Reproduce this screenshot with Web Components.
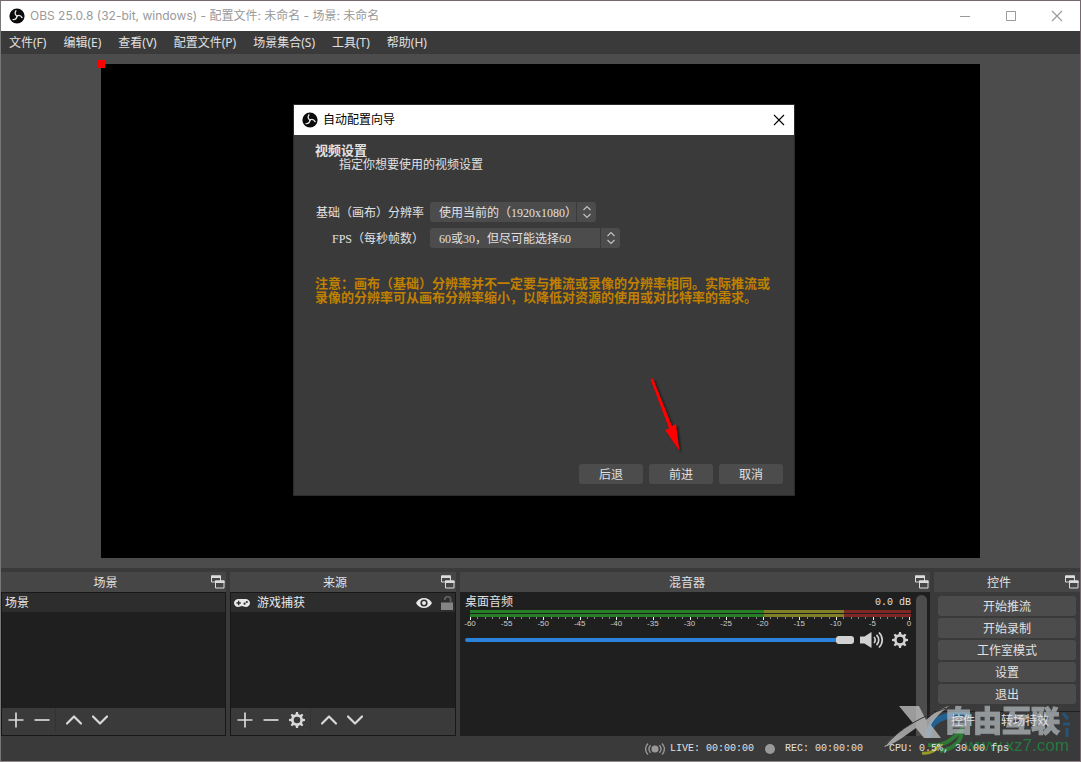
<!DOCTYPE html>
<html lang="zh-CN">
<head>
<meta charset="utf-8">
<title>OBS 25.0.8</title>
<style>
html, body { margin: 0; height: 100%; }
body { font: 12px/16px "Liberation Serif", "Noto Sans CJK SC", sans-serif; color: #e1e0e1; background: #3a3a3a; overflow: hidden; }
</style>
</head>
<body>
<obs-window></obs-window>
<script>
// html is a string, or a function of the element that returns one
const define = (name, html, setup) => customElements.define(name, class extends HTMLElement {
  connectedCallback() {
    if (this.shadowRoot) return;
    const t = document.createElement('template');
    t.innerHTML = typeof html === 'function' ? html(this) : html;
    this.attachShadow({ mode: 'open' }).append(t.content.cloneNode(true));
    if (setup) setup(this, this.shadowRoot);
  }
});

const turned = (angles, shape) => angles.map(a => `<g transform="rotate(${a} 8 8)">${shape}</g>`).join('');
const icons = {
  logo: [16, 16, `<circle cx="8" cy="8" r="7.6" fill="#0b0b0b"/>${turned([0, 120, 240], '<path d="M8 8.2C6.2 6.8 5.6 4.8 6.9 2.8" fill="none" stroke="#e8e8e8" stroke-width="1.3" stroke-linecap="round"/>')}`],
  min: [12, 12, `<path d="M1 6.5h10" stroke="currentColor"/>`],
  max: [12, 12, `<path d="M1.5 1.5h9v9h-9z" fill="none" stroke="currentColor"/>`],
  close: [12, 12, `<path d="M1 1l10 10M11 1L1 11" fill="none" stroke="currentColor" stroke-width="1.1"/>`],
  popout: [14, 14, `<path d="M.5 1h9v6h-9z" fill="none" stroke="#dcdcdc"/><path d="M0 .5h10v2.500H0z" fill="#dcdcdc"/><path d="M4.500 6h8.500v7H4.500z" fill="#464646" stroke="#dcdcdc"/><path d="M4 5.500h9.500V8H4z" fill="#dcdcdc"/>`],
  plus: [16, 16, `<path d="M8 .5v15M.5 8h15" stroke="currentColor" stroke-width="1.7"/>`],
  minus: [16, 16, `<path d="M.5 8h15" stroke="currentColor" stroke-width="1.7"/>`],
  up: [16, 16, `<path d="M1 11.500 8 4.500l7 7" fill="none" stroke="currentColor" stroke-width="2.200" stroke-linecap="round" stroke-linejoin="round"/>`],
  down: [16, 16, `<path d="M1 4.500 8 11.500l7-7" fill="none" stroke="currentColor" stroke-width="2.200" stroke-linecap="round" stroke-linejoin="round"/>`],
  gear: [16, 16, `<circle cx="8" cy="8" r="4.600" fill="none" stroke="currentColor" stroke-width="2.600"/>${turned([0, 45, 90, 135, 180, 225, 270, 315], '<path d="M6.4 3.2 7 0h2l.6 3.200z" fill="currentColor"/>')}`],
  pad: [16, 10, `<path fill-rule="evenodd" fill="currentColor" d="M4.500 1C2 1 0 2.800 0 5s1.800 4 4.200 4C6 9 6.400 8 8 8s2 1 3.800 1C14.200 9 16 7.200 16 5s-2-4-4.500-4zM4 2.800h1.300v1.500h1.500v1.400H5.300v1.500H4V5.700H2.500V4.300H4z"/><circle cx="10.600" cy="5.700" r="1.100" fill="#2d2d2d"/><circle cx="12.800" cy="4" r="1.100" fill="#2d2d2d"/>`],
  eye: [16, 12, `<path fill-rule="evenodd" fill="currentColor" d="M0 6C1.800 2.700 4.800 1 8 1s6.200 1.700 8 5c-1.800 3.300-4.800 5-8 5S1.800 9.300 0 6zm8-3.600a3.600 3.600 0 1 0 0 7.200 3.600 3.600 0 0 0 0-7.200z"/><circle cx="8" cy="6" r="2" fill="currentColor"/>`],
  lock: [14, 14, `<path d="M1 6.500h12V14H1z" fill="#848484"/><path d="M4.800 4V3.300a2.900 2.600 0 0 1 5.800 0V7" fill="none" stroke="#606060" stroke-width="1.800"/>`],
  speaker: [24, 18, `<path fill="currentColor" d="M0 5.500h4.500L11.500 1v16L4.500 12.500H0z"/><path d="M14 6c1.600 1.600 1.600 4.400 0 6M16.500 3.800c3 3 3 7.400 0 10.400M19 1.500c4.300 4.300 4.300 10.700 0 15" fill="none" stroke="currentColor" stroke-width="1.700"/>`],
  live: [20, 14, `<circle cx="10" cy="7" r="3.600" fill="#999"/><g fill="none" stroke="#999" stroke-width="1.300"><path d="M5.600 3.300c-2 2.200-2 5.200 0 7.400M3 1.500c-3 3.400-3 7.600 0 11M14.400 3.300c2 2.200 2 5.200 0 7.400M17 1.500c3 3.400 3 7.600 0 11"/></g>`],
  dot: [10, 10, `<circle cx="5" cy="5" r="5" fill="#999"/>`],
  spin: [10, 16, `<path d="M1.500 6 5 2.500 8.500 6M1.500 10 5 13.500 8.500 10" fill="none" stroke="#c4c4c4" stroke-width="1.100"/>`]
};
define('ui-icon', el => {
  const [w, h, body] = icons[el.getAttribute('name')];
  return `<style>:host{display:inline-flex;flex:none}svg{display:block}</style><svg width="${w}" height="${h}" viewBox="0 0 ${w} ${h}" aria-hidden="true">${body}</svg>`;
});

define('icon-button', el => `<style>
:host{display:inline-flex;flex:none}
button{all:unset;display:grid;place-items:center;width:var(--w,26px);height:var(--h,24px);color:inherit}
</style><button type="button" aria-label="${el.getAttribute('label')}"><ui-icon name="${el.getAttribute('icon')}"></ui-icon></button>`);

define('push-button', `<style>
:host{display:block}
button{display:block;box-sizing:border-box;width:100%;height:20px;border:0;border-radius:3px;padding:1px 0 0;background:#4c4c4c;color:#e1e0e1;font:inherit;line-height:20px}
</style><button type="button"><slot></slot></button>`);

define('title-bar', `<style>
:host{display:flex;align-items:center;height:30px;background:#fff;color:#999;padding-left:8px;font:12px/30px Inter,"Noto Sans CJK SC",sans-serif}
span{flex:1;margin-left:5px}
icon-button{--w:46px;--h:30px}
</style><ui-icon name="logo"></ui-icon><span><slot></slot></span>
<icon-button icon="min" label="最小化"></icon-button><icon-button icon="max" label="最大化"></icon-button><icon-button icon="close" label="关闭"></icon-button>`);

define('menu-bar', `<style>
:host{display:block;background:#3a3a3a}
nav{display:flex;gap:17px;height:23px;padding-left:8px;font:12px/24px "Noto Sans","Noto Sans CJK SC",sans-serif}
a{color:#e1e0e1;text-decoration:none;white-space:nowrap}
</style><nav><a href="#file">文件(F)</a><a href="#edit">编辑(E)</a><a href="#view">查看(V)</a><a href="#profile">配置文件(P)</a><a href="#scenes">场景集合(S)</a><a href="#tools">工具(T)</a><a href="#help">帮助(H)</a></nav>`);

define('preview-area', `<style>
:host{display:flex;justify-content:center;padding:10px;background:#4c4c4c;box-sizing:border-box;min-height:0}
.canvas{position:relative;height:100%;aspect-ratio:16/9;background:#000}
i{position:absolute;left:-4px;top:-4px;width:8px;height:8px;background:#f00}
</style><div class="canvas"><i></i></div>`);

define('combo-box', el => `<style>
:host{display:grid;grid-template-columns:109px var(--w);gap:6px;line-height:20px}
label{text-align:right;white-space:nowrap;padding-top:1px;height:19px}
.field{display:grid;grid-template-columns:1fr 20px;height:20px;background:#4c4c4c;border-radius:3px}
select{appearance:none;grid-area:1/1/2/3;box-sizing:border-box;border:0;background:none;color:#e1e0e1;font:inherit;padding:1px 20px 0 9px;margin:0;width:100%;height:20px}
span{grid-area:1/2;display:grid;place-items:center;border-left:1px solid #3a3a3a;pointer-events:none}
</style><label for="choice">${el.getAttribute('label')}</label><div class="field"><select id="choice"><option>${el.getAttribute('value')}</option></select><span><ui-icon name="spin"></ui-icon></span></div>`);

define('setup-wizard', `<style>
:host{display:flex;flex-direction:column;width:500px;height:390px;background:#3a3a3a;outline:1px solid #2a2a2a}
header{display:flex;align-items:center;height:30px;background:#fff;color:#000;padding-left:8px}
header span{flex:1;margin-left:5px}
header icon-button{--w:30px;--h:30px}
main{flex:1;padding:9px 22px 0 21px}
h1{font-size:13px;line-height:14px;margin:0}
.sub{margin:0 0 0 24px;line-height:14px}
form{display:grid;gap:6px;margin:30px 0 29px}
.note{color:#c08000;font-weight:bold;font-size:13px;line-height:14px;margin:0;white-space:nowrap}
footer{display:flex;justify-content:flex-end;gap:6px;padding:0 11px 11px}
push-button{width:64px}
.arrow{position:absolute;left:350px;top:268px;filter:drop-shadow(2px 2px 1px #0008)}
</style>
<header><ui-icon name="logo"></ui-icon><span>自动配置向导</span><icon-button icon="close" label="关闭"></icon-button></header>
<main><h1>视频设置</h1><p class="sub">指定你想要使用的视频设置</p>
<form><combo-box style="--w:166px" label="基础（画布）分辨率" value="使用当前的（1920x1080）"></combo-box>
<combo-box style="--w:190px" label="FPS（每秒帧数）" value="60或30，但尽可能选择60"></combo-box></form>
<p class="note">注意：画布（基础）分辨率并不一定要与推流或录像的分辨率相同。实际推流或<br>录像的分辨率可从画布分辨率缩小，以降低对资源的使用或对比特率的需求。</p></main>
<footer><push-button>后退</push-button><push-button>前进</push-button><push-button>取消</push-button></footer>
<svg class="arrow" width="42" height="84" viewBox="0 0 42 84" aria-hidden="true"><path d="M6.500 6.500 9 5.500 28 53 32 51 35.500 78 21 57 25 55.500z" fill="#f00"/></svg>`);

define('dock-panel', el => `<style>
:host{display:flex;flex-direction:column;min-width:0}
header{display:flex;align-items:center;height:20px;background:#464646;flex:none}
h2{flex:1;text-align:center;font:inherit;line-height:20px;margin:0;padding-top:1px}
icon-button{--w:16px;--h:20px}
.body{flex:1;display:flex;flex-direction:column;min-height:0}
</style><header><h2>${el.getAttribute('heading')}</h2><icon-button icon="popout" label="浮动"></icon-button></header><div class="body"><slot></slot></div>`);

define('item-list', `<style>
:host{flex:1;display:flex;flex-direction:column;border:1px solid #181818;background:#1f1f1f}
.items{flex:1}
.tools{display:flex;align-items:flex-start;height:27px;background:#3a3a3a;padding-left:1px;color:#d8d8d8}
</style><div class="items"><slot></slot></div><div class="tools"><slot name="tools"></slot></div>`);

define('list-row', `<style>
:host{display:flex;align-items:center;height:19px;background:#2d2d2d;padding:0 1px 0 3px;color:#e8e8e8}
.text{flex:1;line-height:18px;padding-top:1px}
::slotted([slot=start]){margin-right:7px}
::slotted([slot=end]){margin-left:8px}
</style><slot name="start"></slot><span class="text"><slot></slot></span><slot name="end"></slot>`);

define('tool-gap', `<style>:host{width:6px;height:24px;box-sizing:border-box;border-left:1px solid #333}</style>`);

define('volume-meter', `<style>
:host{flex:1;display:flex;background:#1f1f1f;padding:2px 3px 0 5px;gap:5px}
.strip{flex:1;min-width:0}
.top{display:flex;justify-content:space-between;line-height:16px;height:16px}
.db{font:10px/18px "Liberation Mono",monospace}
.scale{margin:0 0 0 5px}
.bar{height:7px;background:linear-gradient(#1f1f1f,#1f1f1f) 0 3px/100% 1px no-repeat,linear-gradient(90deg,#267f26 0 66.700%,#7f7f26 66.700% 84.800%,#7f2626 84.800%)}
svg{display:block;width:100%;height:3px}
.nums{display:flex;justify-content:space-between;font:8px/8px "Liberation Sans",sans-serif;padding-right:2px;color:#ccc}
.nums span{width:0;display:flex;justify-content:center;white-space:nowrap}
.ctl{display:flex;align-items:center;height:20px;margin-top:2px}
input{appearance:none;flex:1;min-width:0;height:20px;margin:0 6px 0 0;background:none}
input::-webkit-slider-runnable-track{height:4px;background:#2a82da;border-radius:2px}
input::-webkit-slider-thumb{appearance:none;width:18px;height:8px;border-radius:3px;background:#d2d2d2;margin-top:-2px}
.ctl icon-button{--w:24px;--h:20px;color:#d2d2d2}
.ctl icon-button + icon-button{--w:16px;margin:0 3px 0 8px}
.scroll{width:11px;border-radius:6px 6px 0 0;background:#4c4c4c;margin-top:1px}
</style>
<div class="strip"><div class="top"><label for="vol">桌面音频</label><span class="db">0.0 dB</span></div>
<div class="scale"><div class="bar"></div><svg aria-hidden="true"></svg><div class="nums"></div></div>
<div class="ctl"><input id="vol" type="range" min="0" max="100" value="100"><icon-button icon="speaker" label="静音"></icon-button><icon-button icon="gear" label="音频设置"></icon-button></div></div>
<div class="scroll"></div>`, (el, root) => {
  let ticks = '', nums = '';
  for (let i = 0; i <= 60; i++) ticks += `<rect x="${i / 60 * 99.6}%" width="1" height="${i % 5 ? 2 : 3}" fill="${i % 5 ? '#888' : '#eee'}" shape-rendering="crispEdges"/>`;
  for (let i = -60; i <= 0; i += 5) nums += `<span>${i}</span>`;
  root.querySelector('svg').innerHTML = ticks;
  root.querySelector('.nums').innerHTML = nums;
});

define('control-list', `<style>
:host{flex:1;display:flex;flex-direction:column}
.buttons{display:grid;gap:2px;padding:4px 4px 7px}
.tabs{flex:1;display:flex;align-items:flex-start;gap:26px;border-top:1px solid #202020;padding-left:17px;line-height:18px}
button{all:unset;position:relative;z-index:2}
</style><div class="buttons"><push-button>开始推流</push-button><push-button>开始录制</push-button><push-button>工作室模式</push-button><push-button>设置</push-button><push-button>退出</push-button></div>
<div class="tabs"><button type="button">控件</button><button type="button">转场特效</button></div>`);

define('status-bar', `<style>
:host{display:flex;justify-content:flex-end;align-items:center;height:25px;padding-right:71px;font:10px/26px "Liberation Mono",monospace;white-space:pre}
span{margin-left:5px;position:relative;z-index:2}
.rec{margin-left:10px}
.cpu{margin-left:26px}
ui-icon + span + ui-icon{margin-left:11px}
</style><ui-icon name="live"></ui-icon><span>LIVE: 00:00:00</span><ui-icon name="dot"></ui-icon><span class="rec">REC: 00:00:00</span><span class="cpu">CPU: 0.5%, 30.00 fps</span>`);

define('site-mark', `<style>
:host{display:block;width:198px;height:58px;pointer-events:none}
svg,span{position:absolute;left:0;top:0}
.name{left:62px;top:-1px;font:900 29px/34px "Noto Sans CJK SC",sans-serif;color:#b4bcc0;-webkit-text-stroke:1px #b4bcc0;opacity:.72;white-space:nowrap}
.url{left:83px;top:33px;font:17px/20px "Liberation Sans",sans-serif;color:#1f8a43;opacity:.8}
</style>
<svg width="198" height="58" viewBox="0 0 198 58" aria-hidden="true"><g fill="none">
<path d="M46 35C46 18 62 9 88 12" stroke="#1d6ba8" stroke-width="6" opacity=".8"/>
<path d="M46 42c14 2 24-4 34-16 0 14-10 20-22 22" stroke="#2c8a35" stroke-width="4" opacity=".8"/>
<path d="M40 50c8 1 14-2 18-9" stroke="#a9ab25" stroke-width="3" opacity=".85"/>
<path d="M181 10l5 6m-5 5h7m-3 4v9" stroke="#1d5f96" stroke-width="3" opacity=".7"/></g>
<path d="M17 3h20l7 14C53 9 60 5 67 3c-8 6-15 13-18 19l10 13H42l-8-10C23 33 11 42 2 44c6-8 19-19 29-24z" fill="#c5c5c5" opacity=".75"/><path d="M4 42C18 25 39 14 64 5" fill="none" stroke="#333" stroke-width="1"/></svg>
<span class="name">自由互联</span><span class="url">www.xz7.com</span>`);

define('obs-window', `<style>
:host{display:flex;flex-direction:column;position:relative;box-sizing:border-box;height:100vh;border:1px solid #75696f;border-left-color:#777;border-bottom-color:#8d8588;background:#3a3a3a}
title-bar,menu-bar,status-bar{flex:none}
preview-area{flex:1}
.docks{display:grid;grid-template-columns:225fr 226fr 470fr 146fr;gap:4px;height:164px;padding-top:4px;flex:none}
setup-wizard{position:absolute;left:293px;top:104px}
site-mark{position:absolute;right:0;bottom:0;z-index:1}
</style>
<title-bar>OBS 25.0.8 (32-bit, windows) - 配置文件: 未命名 - 场景: 未命名</title-bar>
<menu-bar></menu-bar>
<preview-area></preview-area>
<div class="docks">
<dock-panel heading="场景"><item-list><list-row>场景</list-row>
<icon-button slot="tools" icon="plus" label="添加"></icon-button><icon-button slot="tools" icon="minus" label="删除"></icon-button><tool-gap slot="tools"></tool-gap><icon-button slot="tools" icon="up" label="上移"></icon-button><icon-button slot="tools" icon="down" label="下移"></icon-button></item-list></dock-panel>
<dock-panel heading="来源"><item-list><list-row><ui-icon slot="start" name="pad"></ui-icon>游戏捕获<ui-icon slot="end" name="eye"></ui-icon><ui-icon slot="end" name="lock"></ui-icon></list-row>
<icon-button slot="tools" icon="plus" label="添加"></icon-button><icon-button slot="tools" icon="minus" label="删除"></icon-button><icon-button slot="tools" icon="gear" label="属性"></icon-button><tool-gap slot="tools"></tool-gap><icon-button slot="tools" icon="up" label="上移"></icon-button><icon-button slot="tools" icon="down" label="下移"></icon-button></item-list></dock-panel>
<dock-panel heading="混音器"><volume-meter></volume-meter></dock-panel>
<dock-panel heading="控件"><control-list></control-list></dock-panel>
</div>
<status-bar></status-bar>
<setup-wizard></setup-wizard>
<site-mark></site-mark>`);
</script>
</body>
</html>
